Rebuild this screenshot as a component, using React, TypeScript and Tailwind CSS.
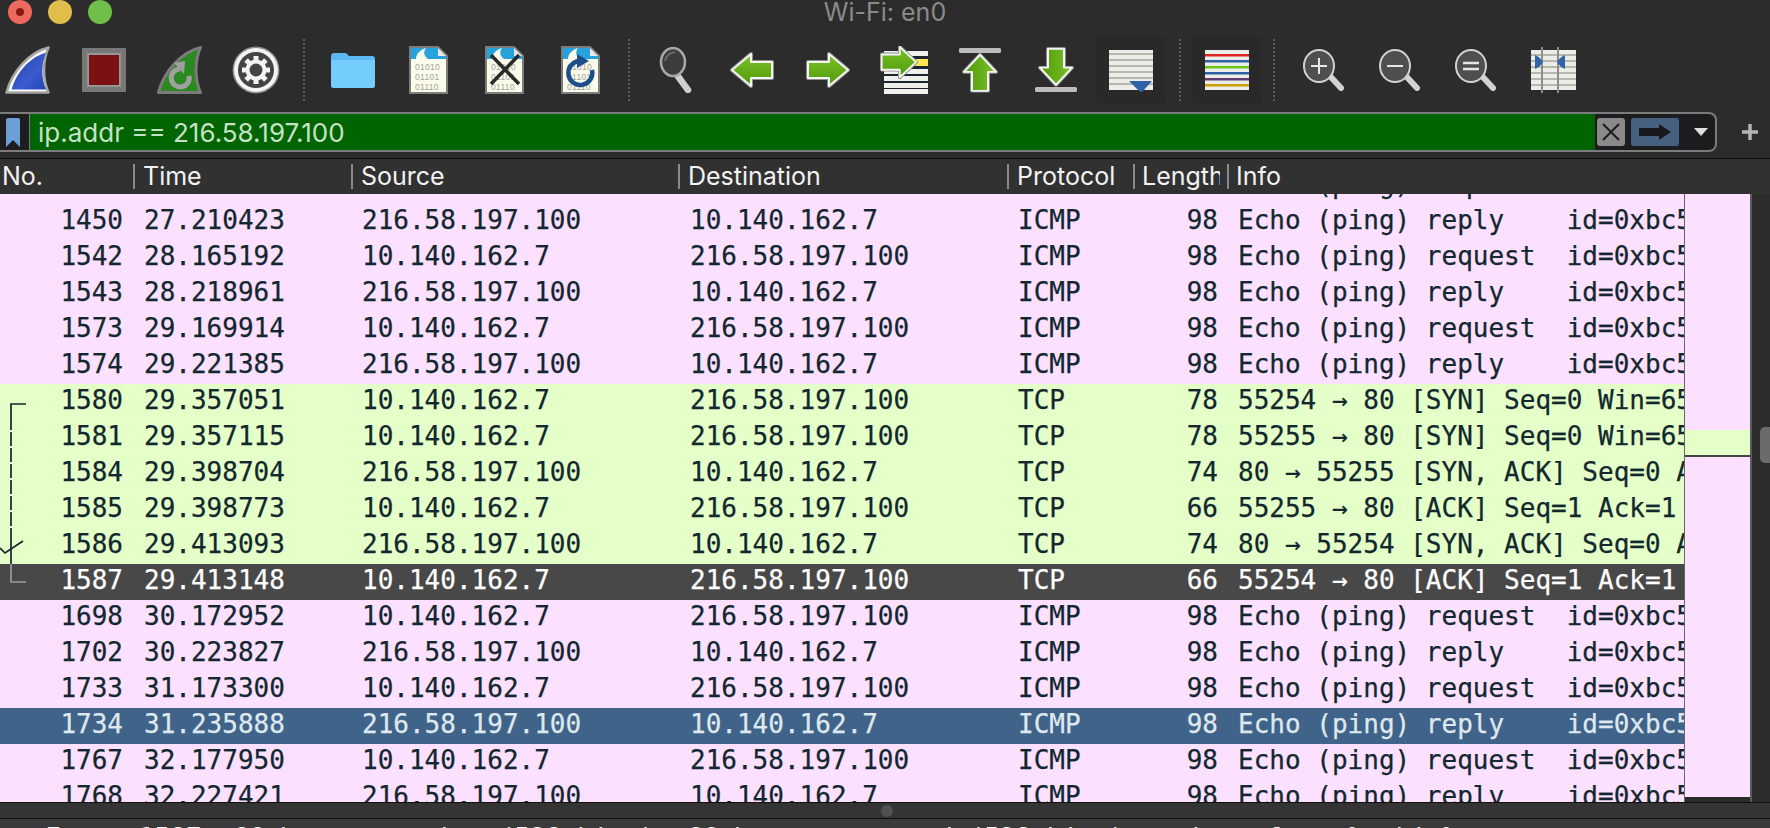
import { FC } from 'react';

type Packet = {
  no: string;
  time: string;
  source: string;
  destination: string;
  protocol: string;
  length: string;
  info: string;
  tone: 'pink' | 'green' | 'dark' | 'blue';
};

const REQ = 'Echo (ping) request  id=0xbc5f, seq=0/0, ttl=64';
const REP = 'Echo (ping) reply    id=0xbc5f, seq=0/0, ttl=52';
const LOCAL = '10.140.162.7';
const GOOGLE = '216.58.197.100';

const ping = (no: string, time: string, out: boolean, tone: Packet['tone'] = 'pink'): Packet => ({
  no,
  time,
  source: out ? LOCAL : GOOGLE,
  destination: out ? GOOGLE : LOCAL,
  protocol: 'ICMP',
  length: '98',
  info: out ? REQ : REP,
  tone,
});

const tcp = (no: string, time: string, out: boolean, length: string, info: string, tone: Packet['tone'] = 'green'): Packet => ({
  no,
  time,
  source: out ? LOCAL : GOOGLE,
  destination: out ? GOOGLE : LOCAL,
  protocol: 'TCP',
  length,
  info,
  tone,
});

const packets: Packet[] = [
  ping('1449', '27.157210', true),
  ping('1450', '27.210423', false),
  ping('1542', '28.165192', true),
  ping('1543', '28.218961', false),
  ping('1573', '29.169914', true),
  ping('1574', '29.221385', false),
  tcp('1580', '29.357051', true, '78', '55254 → 80 [SYN] Seq=0 Win=65535 Len=0'),
  tcp('1581', '29.357115', true, '78', '55255 → 80 [SYN] Seq=0 Win=65535 Len=0'),
  tcp('1584', '29.398704', false, '74', '80 → 55255 [SYN, ACK] Seq=0 Ack=1 Win=60192'),
  tcp('1585', '29.398773', true, '66', '55255 → 80 [ACK] Seq=1 Ack=1 Win=131744'),
  tcp('1586', '29.413093', false, '74', '80 → 55254 [SYN, ACK] Seq=0 Ack=1 Win=60192'),
  tcp('1587', '29.413148', true, '66', '55254 → 80 [ACK] Seq=1 Ack=1 Win=131744', 'dark'),
  ping('1698', '30.172952', true),
  ping('1702', '30.223827', false),
  ping('1733', '31.173300', true),
  ping('1734', '31.235888', false, 'blue'),
  ping('1767', '32.177950', true),
  ping('1768', '32.227421', false),
];

const toneClass = {
  pink: 'bg-[#fce0ff] text-[#12272e]',
  green: 'bg-[#e4ffc7] text-[#12272e]',
  dark: 'bg-[#484848] text-[#fdfdfd]',
  blue: 'bg-[#3f6389] text-[#dfe8ee]',
};

const columns = [
  { label: 'No.', width: 'w-[133px]', pad: 'pl-[2px]' },
  { label: 'Time', width: 'w-[218px]', pad: 'pl-[8px]' },
  { label: 'Source', width: 'w-[327px]', pad: 'pl-[8px]' },
  { label: 'Destination', width: 'w-[329px]', pad: 'pl-[8px]' },
  { label: 'Protocol', width: 'w-[126px]', pad: 'pl-[8px]' },
  { label: 'Length', width: 'w-[94px]', pad: 'pl-[7px]' },
  { label: 'Info', width: 'flex-1', pad: 'pl-[7px]' },
];

const Separator: FC<{ className?: string }> = ({ className }) => (
  <div className={`h-[62px] w-0 border-l-2 border-dotted border-[#5c5c5c] ${className ?? ''}`} />
);

const FIN = 'M43.5 1.5 C25 6 7 25 1.5 46.5 H43.5 C37.5 33 37.5 15 43.5 1.5 Z';

const BlueFin: FC<{ className?: string }> = ({ className }) => (
  <svg viewBox="0 0 45 48" className={`h-[48px] w-[45px] shrink-0 ${className ?? ''}`}>
    <defs>
      <linearGradient id="fin-blue" x1="0" y1="0" x2="1" y2="1">
        <stop offset="0" stopColor="#23409f" />
        <stop offset="0.6" stopColor="#3a5cd0" />
        <stop offset="1" stopColor="#2444b4" />
      </linearGradient>
    </defs>
    <path d={FIN} fill="#ffffff" stroke="#a6a6a6" strokeWidth="2.5" strokeLinejoin="round" />
    <path d={FIN} fill="url(#fin-blue)" transform="translate(30 30) scale(0.82) translate(-30 -30)" />
  </svg>
);

const GreenFin: FC<{ className?: string }> = ({ className }) => (
  <svg viewBox="0 0 45 48" className={`h-[48px] w-[45px] shrink-0 ${className ?? ''}`}>
    <path d={FIN} fill="#2b8a1f" stroke="#7b7b7b" strokeWidth="3" strokeLinejoin="round" />
    <path d="M32 30 A9 9 0 1 1 23 23" fill="none" stroke="#a0a0a0" strokeWidth="5" />
    <path d="M17 17 L28 15 L27 28 Z" fill="#a0a0a0" />
  </svg>
);

const Gear: FC<{ className?: string }> = ({ className }) => (
  <svg viewBox="0 0 48 48" className={`h-[48px] w-[48px] shrink-0 ${className ?? ''}`}>
    <circle cx="24" cy="24" r="23.5" fill="#8f8f8f" />
    <circle cx="24" cy="24" r="22" fill="#f4f4f4" />
    <circle cx="24" cy="24" r="18" fill="#444444" />
    {[0, 45, 90, 135].map((a) => (
      <rect key={a} x="21.5" y="10" width="5" height="28" fill="#f4f4f4" transform={`rotate(${a} 24 24)`} />
    ))}
    <circle cx="24" cy="24" r="10.5" fill="#f4f4f4" />
    <circle cx="24" cy="24" r="6.5" fill="#444444" />
  </svg>
);

const Folder: FC<{ className?: string }> = ({ className }) => (
  <svg viewBox="0 0 45 36" className={`h-[36px] w-[45px] shrink-0 ${className ?? ''}`}>
    <path d="M1 5 Q1 1 4 1 H15 Q17 1 18 3 L19 4 H42 Q45 4 45 7 V33 Q45 36 42 36 H4 Q1 36 1 33 Z" fill="#5cb8f2" />
    <path d="M1 8 H45 V33 Q45 36 42 36 H4 Q1 36 1 33 Z" fill="#74cdfd" />
  </svg>
);

const BinaryFile: FC<{ className?: string; children?: React.ReactNode }> = ({ className, children }) => (
  <svg viewBox="0 0 39 48" className={`h-[48px] w-[39px] shrink-0 ${className ?? ''}`}>
    <path d="M1 1 H29 L38 10 V47 H1 Z" fill="#fbfbe9" stroke="#7d7d7d" strokeWidth="2" />
    <path d="M2 2 H29 V10 H37 V13 H2 Z" fill="#28a2dc" />
    <path d="M7 13 C7 8 11 4 17 2 C14 6 15 10 19 13 Z" fill="#fbfbe9" />
    <path d="M29 2 L37 10 H29 Z" fill="#e8e8e8" />
    <g fill="#a4a4a0" fontFamily="'Liberation Sans', sans-serif" fontSize="8.5" letterSpacing="0.3">
      <text x="6" y="24">01010</text>
      <text x="6" y="34">01101</text>
      <text x="6" y="44">01110</text>
    </g>
    {children}
  </svg>
);

const Magnifier: FC<{ className?: string; mark?: 'plus' | 'minus' | 'equal' }> = ({ className, mark }) => (
  <svg viewBox="0 0 42 42" className={`h-[42px] w-[42px] shrink-0 ${className ?? ''}`}>
    <line x1="26" y1="26" x2="38" y2="39" stroke="#d2d2d2" strokeWidth="6" strokeLinecap="round" />
    <ellipse cx="16" cy="17" rx="15" ry="16" fill="#4f4f4f" stroke="#d2d2d2" strokeWidth="2" />
    {mark === 'plus' && <path d="M8 17 H24 M16 9 V25" stroke="#e6e6e6" strokeWidth="2" />}
    {mark === 'minus' && <path d="M8 17 H24" stroke="#e6e6e6" strokeWidth="2" />}
    {mark === 'equal' && <path d="M8 14 H24 M8 20 H24" stroke="#e6e6e6" strokeWidth="2.4" />}
  </svg>
);

const FindIcon: FC<{ className?: string }> = ({ className }) => (
  <svg viewBox="0 0 34 46" className={`h-[46px] w-[34px] shrink-0 ${className ?? ''}`}>
    <line x1="18" y1="28" x2="29" y2="43" stroke="#cfcfcf" strokeWidth="6.5" strokeLinecap="round" />
    <ellipse cx="14" cy="15" rx="12" ry="14" fill="#3c3c3c" stroke="#a9a9a9" strokeWidth="2.5" />
    <path d="M6 14 Q8 6 16 5" fill="none" stroke="#6a6a6a" strokeWidth="2" />
  </svg>
);

const ARROW = 'M2 10 H23 V2 L42 18 L23 34 V26 H2 Z';

const ArrowShape: FC<{ id: string; transform?: string }> = ({ id, transform }) => (
  <g transform={transform}>
    <defs>
      <linearGradient id={id} x1="0" y1="0" x2="0" y2="1">
        <stop offset="0" stopColor="#7cc22a" />
        <stop offset="1" stopColor="#4f9a08" />
      </linearGradient>
    </defs>
    <path d={ARROW} fill="none" stroke="#8c8c8c" strokeWidth="4" strokeLinejoin="round" />
    <path d={ARROW} fill={`url(#${id})`} stroke="#f4f4f4" strokeWidth="2" strokeLinejoin="round" />
  </g>
);

const Arrow: FC<{ id: string; flip?: boolean; className?: string }> = ({ id, flip, className }) => (
  <svg viewBox="-1 -1 46 38" className={`h-[38px] w-[46px] shrink-0 ${className ?? ''}`}>
    <ArrowShape id={id} transform={flip ? 'translate(44 0) scale(-1 1)' : undefined} />
  </svg>
);

const Stripes: FC<{ className?: string; children?: React.ReactNode }> = ({ className, children }) => (
  <svg viewBox="0 0 44 46" className={`h-[46px] w-[44px] shrink-0 ${className ?? ''}`}>
    <rect x="0" y="3" width="44" height="40" fill="#ecece8" />
    {[6, 12, 18, 24, 30, 36].map((y) => (
      <rect key={y} x="0" y={y} width="44" height="2" fill="#b7b7ae" />
    ))}
    {children}
  </svg>
);

const GotoIcon: FC<{ className?: string }> = ({ className }) => (
  <svg viewBox="0 0 48 48" className={`h-[48px] w-[48px] shrink-0 ${className ?? ''}`}>
    <rect x="4" y="4" width="44" height="44" fill="#1c2630" />
    {[5, 23, 30, 37, 43].map((y) => (
      <rect key={y} x="4" y={y} width="44" height="5" fill="#f0f0ec" />
    ))}
    <rect x="4" y="13" width="44" height="7" fill="#ffe552" />
    <g transform="translate(0 -1) scale(0.86 0.95)">
      <ArrowShape id="goto-green" />
    </g>
  </svg>
);

const EdgeArrow: FC<{ id: string; up?: boolean; className?: string }> = ({ id, up, className }) => (
  <svg viewBox="0 0 44 46" className={`h-[46px] w-[44px] shrink-0 ${className ?? ''}`}>
    <rect x="1" y={up ? 1 : 40} width="42" height="5" rx="1.5" fill="#bdbdbd" />
    <g transform={up ? 'translate(40 6) rotate(90) scale(0.9 1)' : 'translate(40 0) rotate(90) scale(0.9 1)'}>
      <ArrowShape id={id} transform={up ? 'translate(44 0) scale(-1 1)' : undefined} />
    </g>
  </svg>
);

const ColorRules: FC<{ className?: string }> = ({ className }) => (
  <svg viewBox="0 0 44 46" className={`h-[46px] w-[44px] shrink-0 ${className ?? ''}`}>
    <rect x="0" y="3" width="44" height="40" fill="#ecece8" />
    <rect x="0" y="7" width="44" height="2.5" fill="#e02525" />
    <rect x="0" y="13" width="44" height="2.5" fill="#2c62a4" />
    <rect x="0" y="19" width="44" height="2.5" fill="#6cc416" />
    <rect x="0" y="25" width="44" height="2.5" fill="#2c62a4" />
    <rect x="0" y="31" width="44" height="2.5" fill="#5c3a6e" />
    <rect x="0" y="37" width="44" height="2.5" fill="#c9a000" />
  </svg>
);

const PacketRow: FC<{ packet: Packet }> = ({ packet }) => (
  <div className={`flex h-[36px] shrink-0 items-center overflow-hidden whitespace-pre pb-[4px] font-['DejaVu_Sans_Mono',monospace] text-[26px] [-webkit-text-stroke:0.25px] ${toneClass[packet.tone]}`}>
    <span className="w-[123px] shrink-0 text-right">{packet.no}</span>
    <span className="ml-[21px] w-[218px] shrink-0">{packet.time}</span>
    <span className="w-[328px] shrink-0">{packet.source}</span>
    <span className="w-[328px] shrink-0">{packet.destination}</span>
    <span className="w-[150px] shrink-0">{packet.protocol}</span>
    <span className="w-[50px] shrink-0 text-right">{packet.length}</span>
    <span className="ml-[20px] flex-1 overflow-hidden">{packet.info}</span>
  </div>
);

const App: FC = () => {
  return (
    <div className="flex h-screen w-full flex-col overflow-hidden bg-[#2c2c2c] font-['Inter','Liberation_Sans',sans-serif]">
      {/* title bar */}
      <div className="grid h-[36px] shrink-0 grid-cols-[1fr_auto_1fr]">
        <div className="flex h-[24px] items-center gap-[16px] pl-[8px]">
          <span className="flex h-[24px] w-[24px] items-center justify-center rounded-full bg-[#ee6a5f]">
            <span className="h-[8px] w-[8px] rounded-full bg-[#8a1a12]" />
          </span>
          <span className="h-[24px] w-[24px] rounded-full bg-[#e1bd4c]" />
          <span className="h-[24px] w-[24px] rounded-full bg-[#70bf4b]" />
        </div>
        <div className="h-[24px] text-[25px] leading-[24px] text-[#8a8a8a]">Wi-Fi: en0</div>
        <div />
      </div>

      {/* main toolbar */}
      <div className="flex h-[68px] shrink-0 items-center">
        <BlueFin className="ml-[5px]" />
        <svg viewBox="0 0 44 44" className="ml-[32px] h-[44px] w-[44px] shrink-0">
          <rect width="44" height="44" fill="#787878" />
          <rect x="5" y="5" width="34" height="34" fill="#969696" />
          <rect x="7" y="7" width="30" height="30" fill="#7b1111" />
        </svg>
        <GreenFin className="ml-[31px]" />
        <Gear className="ml-[30px]" />
        <Separator className="ml-[23px]" />
        <Folder className="ml-[25px]" />
        <BinaryFile className="ml-[34px]" />
        <BinaryFile className="ml-[37px]">
          <path d="M6 9 L34 38 M34 9 L6 38" stroke="#2a2a2a" strokeWidth="3.5" />
        </BinaryFile>
        <BinaryFile className="ml-[37px]">
          <path d="M31 24 A12 12 0 1 1 18 15" fill="none" stroke="#1f4e8c" strokeWidth="4.5" />
          <path d="M16 8 L28 15 L16 22 Z" fill="#1f4e8c" />
        </BinaryFile>
        <Separator className="ml-[28px]" />
        <FindIcon className="ml-[29px]" />
        <Arrow id="back-green" flip className="ml-[36px]" />
        <Arrow id="next-green" className="ml-[30px]" />
        <GotoIcon className="ml-[29px]" />
        <EdgeArrow id="first-green" up className="ml-[30px]" />
        <EdgeArrow id="last-green" className="ml-[32px]" />
        <div className="ml-[19px] flex h-[68px] w-[68px] shrink-0 items-center justify-center rounded-sm bg-[#292929]">
          <Stripes>
            <path d="M20 34 H43 L34 44 Q32 46 30 44 Z" fill="#2f62a6" />
          </Stripes>
        </div>
        <Separator className="ml-[14px]" />
        <div className="ml-[12px] flex h-[68px] w-[68px] shrink-0 items-center justify-center rounded-sm bg-[#292929]">
          <ColorRules />
        </div>
        <Separator className="ml-[12px]" />
        <Magnifier mark="plus" className="ml-[28px]" />
        <Magnifier mark="minus" className="ml-[34px]" />
        <Magnifier mark="equal" className="ml-[34px]" />
        <svg viewBox="0 0 45 46" className="ml-[34px] h-[46px] w-[45px] shrink-0">
          <rect x="0" y="3" width="45" height="40" fill="#ecece8" />
          {[7, 13, 19, 25, 31, 37].map((y) => (
            <rect key={y} x="0" y={y} width="45" height="2" fill="#b7b7ae" />
          ))}
          <rect x="10" y="0" width="2" height="46" fill="#8e8e8a" />
          <rect x="26" y="0" width="2" height="46" fill="#8e8e8a" />
          <path d="M4 8 Q9 10 12 15 Q9 20 4 22 Z M34 8 Q29 10 26 15 Q29 20 34 22 Z" fill="#2f62a6" />
        </svg>
      </div>

      {/* display filter */}
      <div className="mt-[8px] flex h-[40px] shrink-0 items-center">
        <div className="flex h-[40px] w-[1717px] shrink-0 overflow-hidden rounded-r-lg border-y-2 border-r-2 border-[#7c7c7c] bg-[#1d1d1f]">
          <div className="flex w-[30px] shrink-0 items-center justify-center border-r border-[#7c7c7c]">
            <svg viewBox="0 0 16 29" className="-ml-[4px] h-[29px] w-[16px]">
              <path d="M1 2 Q1 0 3 0 H13 Q15 0 15 2 V29 L8 22 L1 29 Z" fill="#6c9fd8" />
            </svg>
          </div>
          <div className="flex w-[1565px] shrink-0 items-center bg-[#006400] pl-[8px] text-[26px] text-[#c6e2c6]">
            ip.addr == 216.58.197.100
          </div>
          <div className="ml-[2px] flex h-[28px] w-[28px] shrink-0 items-center justify-center self-center rounded-[3px] bg-[#8a8a8a]">
            <svg viewBox="0 0 20 20" className="h-[20px] w-[20px]">
              <path d="M2 2 L18 18 M18 2 L2 18" stroke="#1c1c1c" strokeWidth="2" />
            </svg>
          </div>
          <div className="ml-[6px] flex h-[28px] w-[48px] shrink-0 items-center justify-center self-center rounded-[3px] bg-[#46617f]">
            <svg viewBox="0 0 34 16" className="h-[16px] w-[34px]">
              <path d="M1 4 H21 V0 L33 8 L21 16 V12 H1 Z" fill="#17191c" />
            </svg>
          </div>
          <svg viewBox="0 0 14 8" className="ml-[15px] h-[8px] w-[14px] self-center">
            <path d="M0 0 H14 L7 8 Z" fill="#e0e0e0" />
          </svg>
        </div>
        <svg viewBox="0 0 16 16" className="ml-[25px] h-[16px] w-[16px] shrink-0">
          <path d="M8 0 V16 M0 8 H16" stroke="#b4b4b4" strokeWidth="3.5" />
        </svg>
      </div>

      {/* column headers */}
      <div className="mt-[6px] flex h-[36px] shrink-0 border-t border-[#111111] bg-[#313131] text-[25px] text-[#f2f2f2]">
        {columns.map((col, i) => (
          <div key={col.label} className={`flex items-center ${col.width}`}>
            {i > 0 && <span className="h-[25px] w-[2px] shrink-0 bg-[#8a8a8a]" />}
            <span className={`mr-[7px] min-w-0 overflow-hidden whitespace-nowrap ${col.pad}`}>{col.label}</span>
          </div>
        ))}
      </div>

      {/* packet list */}
      <div className="flex h-[608px] shrink-0">
        <div className="relative flex-1 overflow-hidden">
          <div className="-mt-[26px] flex flex-col">
            {packets.map((packet) => (
              <PacketRow key={packet.no} packet={packet} />
            ))}
          </div>
          <svg viewBox="0 0 30 200" className="absolute left-0 top-[209px] h-[200px] w-[30px]">
            <path d="M26 1 H11 V27 M11 125 V161" fill="none" stroke="#12272e" strokeWidth="1.7" />
            <path d="M11 29 V125" fill="none" stroke="#12272e" strokeWidth="1.7" strokeDasharray="14 2" />
            <path d="M0 145 L5 150 L23 138" fill="none" stroke="#12272e" strokeWidth="1.7" />
            <path d="M11 161 V179 H26" fill="none" stroke="#9a9a9a" strokeWidth="1.7" />
          </svg>
        </div>
        <div className="flex w-[66px] shrink-0 flex-col border-l border-[#666666] bg-[#fce0ff]">
          <div className="h-[236px] shrink-0" />
          <div className="h-[25px] shrink-0 bg-[#e4ffc7]" />
          <div className="h-[2px] shrink-0 bg-[#444444]" />
          <div className="flex-1" />
          <div className="h-[5px] shrink-0 bg-[#2b2b2b]" />
        </div>
        <div className="w-[20px] shrink-0 border-l-2 border-[#5a5a5a] pl-[8px] pt-[233px]">
          <div className="h-[36px] w-[10px] rounded-l-[5px] bg-[#6b6b6b]" />
        </div>
      </div>

      {/* splitter */}
      <div className="flex h-[17px] shrink-0 items-center justify-center border-y border-[#111111] bg-[#343434] pl-[3px]">
        <span className="h-[12px] w-[12px] rounded-full bg-[#505050]" />
      </div>

      {/* packet details, cut off by the window edge */}
      <div className="flex-1 overflow-hidden whitespace-pre bg-[#3a3a3a] pl-[45px] pt-[1px] font-['DejaVu_Sans_Mono',monospace] text-[26px] leading-[36px] text-[#f2f2f2]">
        Frame 1587: 66 bytes on wire (528 bits), 66 bytes captured (528 bits) on interface 0, id 0
      </div>
    </div>
  );
};

export default App;
